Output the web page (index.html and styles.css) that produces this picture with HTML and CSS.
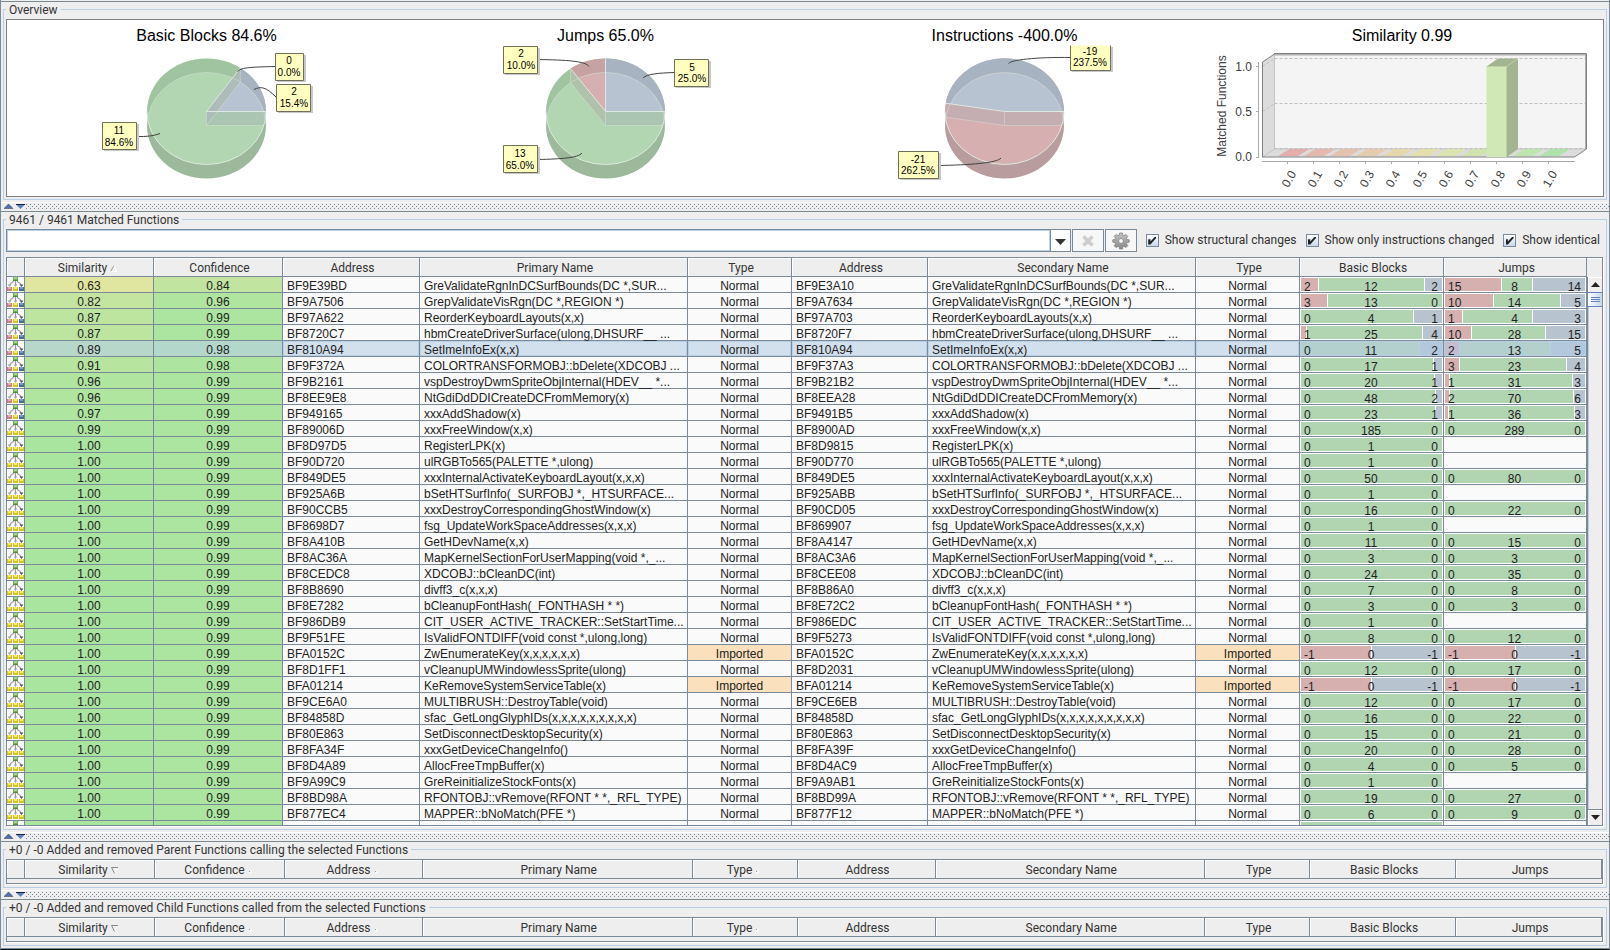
FILE: index.html
```html
<!DOCTYPE html>
<html lang="en">
<head>
<meta charset="utf-8">
<title>Matched Functions</title>
<link rel="stylesheet" href="styles.css">
</head>
<body>
<svg class="defs" width="0" height="0" aria-hidden="true">
  <defs>
    <clipPath id="pie-base"><ellipse cx="199.500" cy="105.500" rx="59.500" ry="53"/></clipPath>
    <clipPath id="pie-top"><ellipse cx="199.500" cy="91.500" rx="59.500" ry="53"/></clipPath>
    <linearGradient id="gear-fill" x1="0" y1="0" x2="0" y2="1"><stop offset="0" stop-color="#c4c4c4"/><stop offset="1" stop-color="#868686"/></linearGradient>
    <symbol id="tree" viewBox="0 0 17 15">
      <path d="M8.500 4v5M7 4.500Q3.500 5.500 2.500 9M10 4.500Q13.500 5.500 14.500 9" fill="none" stroke="#999" stroke-width="1.200"/>
      <path d="M0.500 7.500h4L2.500 10zM6.500 7.500h4L8.500 10z" fill="#aaa"/><path d="M12.500 7.500h4L14.500 10z" fill="#555"/>
      <rect x="6" y="0" width="5" height="4" fill="#6fae55"/><rect x="7" y="0" width="3" height="2" fill="#a5d590"/><path d="M6 3.500h5" stroke="#4f8c3c"/>
    </symbol>
    <symbol id="tree-changed" viewBox="0 0 17 15">
      <use href="#tree" width="17" height="15"/>
      <rect x="0" y="10" width="5" height="4" fill="#cf7c80"/><rect x="1" y="10" width="3" height="2" fill="#e5a9ab"/>
      <rect x="6" y="10" width="5" height="4" fill="#d8c325"/><rect x="7" y="10" width="3" height="2" fill="#f8ea68"/>
      <rect x="12" y="10" width="5" height="4" fill="#476f98"/><rect x="13" y="10" width="3" height="2" fill="#7c9fc0"/>
    </symbol>
    <symbol id="tree-same" viewBox="0 0 17 15">
      <use href="#tree" width="17" height="15"/>
      <path d="M0 10h5v4H0zM6 10h5v4H6zM12 10h5v4h-5z" fill="#d8c325"/>
      <path d="M1 10h3v2H1zM7 10h3v2H7zM13 10h3v2h-3z" fill="#f8ea68"/>
    </symbol>
  </defs>
</svg>
<main class="window">
  <section class="pane">
    <fieldset class="group">
      <legend>Overview</legend>
      <div class="charts">
        <svg class="chart" viewBox="0 0 399 176" role="img" aria-label="Basic Blocks">
          <text class="title" x="199.500" y="21">Basic Blocks 84.6%</text>
          <path fill="#9cb99b" d="M140 91.500v14a59.500 53 0 0 0 119 0v-14z"/>
          <ellipse cx="199.500" cy="91.500" rx="59.500" ry="53" fill="#a0c3a0"/>
          <path fill="#a7b3c0" d="M199.500 91.500H259A59.500 53 0 0 0 233.300 47.900z"/>
          <g clip-path="url(#pie-base)">
            <ellipse cx="199.500" cy="91.500" rx="59.500" ry="53" fill="#b1d6b1"/>
            <path fill="#b7c3d1" d="M199.500 91.500H259A59.500 53 0 0 0 233.300 47.900z"/>
          </g>
          <g clip-path="url(#pie-top)">
            <path fill="#aac6b2" d="M199.500 91.500H259v14H199.500z"/>
            <path fill="#adbcb9" d="M199.500 91.500L233.300 47.900v14L199.500 105.500z"/>
          </g>
          <path class="edge faint" d="M140 105.500a59.500 53 0 0 1 119 0M199.500 91.500v14M233.300 47.900v14L199.500 105.500H257"/>
          <path class="edge" d="M140 91.500a59.500 53 0 0 0 119 0H199.500L233.300 47.900"/>
          <path class="leader" d="M230.500 51.500C234 48 240 47 269 46.500M247 69.500C254 66 259 67 269 77M130 116.500Q144 117 153 113.500"/>
          <path class="tip-shadow" d="M270 35h29v27h-29zM271 66h35v27h-35zM97 104h35v27h-35z"/>
          <path class="tip" d="M268.500 33.500h28v27h-28zM269.500 64.500h34v27h-34zM95.500 102.500h34v27h-34z"/>
          <g class="tip-text">
            <text x="282" y="44">0</text><text x="282" y="56">0.0%</text>
            <text x="287" y="75">2</text><text x="287" y="87">15.4%</text>
            <text x="112" y="114">11</text><text x="112" y="126">84.6%</text>
          </g>
        </svg>
        <svg class="chart" viewBox="0 0 399 176" role="img" aria-label="Jumps">
          <text class="title" x="199.500" y="21">Jumps 65.0%</text>
          <path fill="#9cb99b" d="M140 91.500v14a59.500 53 0 0 0 119 0v-14z"/>
          <ellipse cx="199.500" cy="91.500" rx="59.500" ry="53" fill="#a0c3a0"/>
          <path fill="#a7b3c0" d="M199.500 91.500H259A59.500 53 0 0 0 199.500 38.500z"/>
          <path fill="#c6a2a3" d="M199.500 91.500V38.500A59.500 53 0 0 0 164.500 48.600z"/>
          <g clip-path="url(#pie-base)">
            <ellipse cx="199.500" cy="91.500" rx="59.500" ry="53" fill="#b1d6b1"/>
            <path fill="#b7c3d1" d="M199.500 91.500H259A59.500 53 0 0 0 199.500 38.500z"/>
            <path fill="#d6b0b1" d="M199.500 91.500V38.500A59.500 53 0 0 0 164.500 48.600z"/>
          </g>
          <g clip-path="url(#pie-top)">
            <path fill="#aac6b2" d="M199.500 91.500H259v14H199.500z"/>
            <path fill="#b0c2ab" d="M199.500 91.500L164.500 48.600v14L199.500 105.500z"/>
          </g>
          <path class="edge faint" d="M140 105.500a59.500 53 0 0 1 119 0M199.500 91.500v14M164.500 48.600v14L199.500 105.500H257"/>
          <path class="edge" d="M140 91.500a59.500 53 0 0 0 119 0H199.500V38.500M199.500 91.500L164.500 48.600"/>
          <path class="leader" d="M132 39.500C160 40 180 41 183 46.500M132 139.500C155 139 172 138 176 133M269 52.500C252 53 241 54 237 58"/>
          <path class="tip-shadow" d="M99 28h35v27H99zM99 127h35v27H99zM270 41h35v27h-35z"/>
          <path class="tip" d="M97.500 26.500h34v27h-34zM97.500 125.500h34v27h-34zM268.500 39.500h34v27h-34z"/>
          <g class="tip-text">
            <text x="115" y="37">2</text><text x="115" y="49">10.0%</text>
            <text x="114" y="137">13</text><text x="114" y="149">65.0%</text>
            <text x="286" y="51">5</text><text x="286" y="62">25.0%</text>
          </g>
        </svg>
        <svg class="chart" viewBox="0 0 399 176" role="img" aria-label="Instructions">
          <text class="title" x="199.500" y="21">Instructions -400.0%</text>
          <path fill="#b99c9d" d="M140 91.500v14a59.500 53 0 0 0 119 0v-14z"/>
          <ellipse cx="199.500" cy="91.500" rx="59.500" ry="53" fill="#c2a4a6"/>
          <path fill="#a7b3c0" d="M199.500 91.500H259A59.500 53 0 0 0 140.700 83.200z"/>
          <g clip-path="url(#pie-base)">
            <ellipse cx="199.500" cy="91.500" rx="59.500" ry="53" fill="#d6b0b1"/>
            <path fill="#b7c3d1" d="M199.500 91.500H259A59.500 53 0 0 0 140.700 83.200z"/>
          </g>
          <g clip-path="url(#pie-top)">
            <path fill="#c5aeb1" d="M199.500 91.500H259v14H199.500L140.700 97.200v-14z"/>
          </g>
          <path class="edge faint" d="M140 105.500a59.500 53 0 0 1 119 0M199.500 91.500v14M140.700 97.200L199.500 105.500H257"/>
          <path class="edge" d="M140 91.500a59.500 53 0 0 0 119 0H199.500L140.700 83.200"/>
          <path class="leader" d="M266 37.500C230 37 206 40 203.500 43.500M133 145.500C165 145 192 143 196 138"/>
          <path class="tip-shadow" d="M267 27h41v25h-41zM95 133h41v27H95z"/>
          <path class="tip-fill" d="M265.500 25.500h40v25h-40z"/>
          <path class="tip-side" d="M265.500 25.500v25h40v-25"/>
          <path class="tip" d="M93.500 131.500h40v27h-40z"/>
          <g class="tip-text">
            <text x="285" y="35">-19</text><text x="285" y="46">237.5%</text>
            <text x="113" y="143">-21</text><text x="113" y="154">262.5%</text>
          </g>
        </svg>
        <svg class="chart" id="similarity-chart" viewBox="0 0 399 176" role="img" aria-label="Similarity">
          <text class="title" x="198" y="21">Similarity 0.99</text>
          <path fill="#f4f4f4" d="M70.500 34.500h311v94.500h-311z"/>
          <path fill="#dcdcdc" d="M58.500 42L70.500 34v95l-12 8zM58.500 137l12-8H382l-12 8z"/>
          <path d="M70.500 34v95H382M70.500 129l-12 8" fill="none" stroke="#c4c4c4"/>
          <path d="M70.500 38.500H382M70.500 83.500H382M70.500 128.500H382M58.500 46.500l12-8M58.500 91.500l12-8" fill="none" stroke="#c0c0c0" stroke-dasharray="3 2"/>
          <path d="M70 34.500H382V129" fill="none" stroke="#b0b0b0" stroke-width="2"/>
          <path d="M58.500 137V42l12-8M70 33.500H382.500V129l-12 8H58.500" fill="none" stroke="#808080"/>
          <g id="tiles"></g>
          <path fill="#cfe8b5" d="M282.500 46.500h20V137h-20z"/>
          <path fill="#a3b590" d="M282.500 46.500l11.500-8h20V129l-11.500 8V46.500z"/>
          <path d="M282.500 46.500h20l11.500-8M302.500 46.500V137" fill="none" stroke="#bdd0a6"/>
          <path d="M54.500 42v95M52 46.500h3M52 91.500h3M52 137.500h3M58 141.500h313" fill="none" stroke="#a8a8a8"/>
          <g class="axis end"><text x="48" y="51">1.0</text><text x="48" y="96">0.5</text><text x="48" y="141">0.0</text></g>
          <text class="axis" transform="translate(22 86) rotate(-90)">Matched Functions</text>
          <g class="axis" id="ticks"></g>
        </svg>
      </div>
    </fieldset>
  </section>
  <div class="splitter"><svg width="22" height="5" viewBox="0 0 22 5"><path fill="#4f6fb0" stroke="#334" stroke-width=".5" d="M0 4.500L4.500 0 9 4.500z"/><path fill="#5b80c8" d="M12.500 1h8L16.500 5z"/><path stroke="#223" d="M12 .5h9"/></svg></div>
  <section class="pane grow">
    <fieldset class="group">
      <legend>9461 / 9461 Matched Functions</legend>
      <form class="toolbar">
        <div class="combo"><input type="text" aria-label="Filter"><button type="button" aria-label="Filter history"><svg width="11" height="6" viewBox="0 0 11 6"><path d="M0 0h11L5.500 6z" fill="#333"/></svg></button></div>
        <button class="tool" type="button" aria-label="Clear filter"><svg width="14" height="14" viewBox="0 0 14 14"><path d="M2.500 2.500l9 9M11.500 2.500l-9 9" stroke="#cdcdcd" stroke-width="3.600"/></svg></button>
        <button class="tool" type="button" aria-label="Filter settings"><svg width="18" height="18" viewBox="0 0 18 18"><path fill="url(#gear-fill)" stroke="#777" stroke-width=".7" fill-rule="evenodd" d="M7.600 1h2.800l.4 2.200 1.200.5 1.900-1.300 1.900 1.900-1.300 1.900.5 1.200 2.200.4v2.400l-2.200.4-.5 1.200 1.300 1.900-1.900 1.900-1.900-1.300-1.200.5-.4 2.200H7.600l-.4-2.200-1.200-.5-1.900 1.300-1.900-1.900 1.300-1.900-.5-1.200L.8 10.200V7.800L3 7.400l.5-1.200-1.300-1.900 1.900-1.900L6 3.700l1.200-.5zM9 6.600a2.400 2.400 0 1 0 .01 0z"/></svg></button>
        <div class="checks">
          <label><input type="checkbox" checked>Show structural changes</label>
          <label><input type="checkbox" checked>Show only instructions changed</label>
          <label><input type="checkbox" checked>Show identical</label>
        </div>
      </form>
      <div class="tablebox main">
        <div class="view">
          <table>
            <colgroup><col class="c-icon"><col class="c-num"><col class="c-num"><col class="c-addr"><col><col class="c-type"><col class="c-addr2"><col><col class="c-type"><col class="c-bb"><col class="c-jumps"></colgroup>
            <thead><tr><th></th><th>Similarity <svg width="7" height="7" viewBox="0 0 7 7"><path d="M.5 6.500L4 .5" stroke="#999" fill="none"/><path d="M4 .5l2.500 6h-6" stroke="#fff" fill="none"/></svg></th><th>Confidence</th><th>Address</th><th>Primary Name</th><th>Type</th><th>Address</th><th>Secondary Name</th><th>Type</th><th>Basic Blocks</th><th>Jumps</th></tr></thead>
            <tbody id="rows"></tbody>
          </table>
        </div>
        <div class="scrollbar">
          <div class="corner"></div>
          <button type="button" aria-label="Scroll up"><svg width="9" height="5" viewBox="0 0 9 5"><path d="M0 5L4.500 0 9 5z" fill="#222"/></svg></button>
          <div class="track"><div class="thumb"><i></i><i></i><i></i></div></div>
          <button class="down" type="button" aria-label="Scroll down"><svg width="9" height="5" viewBox="0 0 9 5"><path d="M0 0h9L4.500 5z" fill="#222"/></svg></button>
        </div>
      </div>
    </fieldset>
  </section>
  <div class="splitter"><svg width="22" height="5" viewBox="0 0 22 5"><path fill="#4f6fb0" stroke="#334" stroke-width=".5" d="M0 4.500L4.500 0 9 4.500z"/><path fill="#5b80c8" d="M12.500 1h8L16.500 5z"/><path stroke="#223" d="M12 .5h9"/></svg></div>
  <section class="pane">
    <fieldset class="group">
      <legend>+0 / -0 Added and removed Parent Functions calling the selected Functions</legend>
      <div class="tablebox empty"></div>
    </fieldset>
  </section>
  <div class="splitter"><svg width="22" height="5" viewBox="0 0 22 5"><path fill="#4f6fb0" stroke="#334" stroke-width=".5" d="M0 4.500L4.500 0 9 4.500z"/><path fill="#5b80c8" d="M12.500 1h8L16.500 5z"/><path stroke="#223" d="M12 .5h9"/></svg></div>
  <section class="pane last">
    <fieldset class="group">
      <legend>+0 / -0 Added and removed Child Functions called from the selected Functions</legend>
      <div class="tablebox empty"></div>
    </fieldset>
  </section>
</main>
<script src="app.js"></script>
</body>
</html>
```
FILE: styles.css
```css
* { box-sizing: border-box; }
body { margin: 0; background: #111; font: 12px/15px Roboto, "Liberation Sans", sans-serif; color: #333; }
.defs { position: absolute; }
.window { display: flex; flex-direction: column; height: 100vh; min-height: 600px; padding-top: 1px; background: #eee; border: solid #7a8a99; border-width: 0 1px; border-bottom: 1px solid #111; }
.pane { display: flex; border-top: 1px solid #7a8a8f; padding: 0 2px 2px; }
.pane.grow { flex: 1; min-height: 0; }
.pane.last { border-bottom: 1px solid #7a8a99; }
.group { flex: 1; display: flex; flex-direction: column; min-width: 0; margin: 0; padding: 2px; border: 1px solid #b8cfe5; }
legend { padding: 0 3px; height: 15px; line-height: 16px; }

.charts { display: grid; grid-template-columns: repeat(4, 1fr); border: 1px solid #808080; background: #fff; }
.chart { display: block; width: 100%; height: 176px; font-family: "Liberation Sans", sans-serif; }
.chart text { text-anchor: middle; }
.title { font-size: 16px; fill: #000; }
.axis { font-size: 12px; fill: #404040; }
.chart .end text { text-anchor: end; }
.edge { fill: none; stroke: #dde8e0; stroke-width: 1; }
.edge.faint { stroke-opacity: .4; }
.leader { fill: none; stroke: #444; stroke-width: 1; }
.tip { fill: #ffffc0; stroke: #707058; }
.tip-fill { fill: #ffffc0; }
.tip-side { fill: none; stroke: #707058; }
.tip-shadow { fill: #c8c8c8; }
.tip-text { font-size: 10px; fill: #000; }

.splitter { height: 9px; padding: 1px 0 2px 3px; border-top: 1px solid #fff; background-image: conic-gradient(from 0deg at 1px 1px, transparent 75%, #7a8a99 0), conic-gradient(from 0deg at 1px 1px, transparent 75%, #7a8a99 0); background-size: 4px 4px; background-position: 1px 1px, 3px 3px; background-clip: content-box; }
.splitter svg { display: block; background: #eee; }

.toolbar { display: flex; gap: 1px; height: 23px; margin-bottom: 5px; }
.combo { flex: 1; display: flex; min-width: 0; }
.combo input { flex: 1; min-width: 0; border: 1px solid #7a8a99; box-shadow: inset 0 0 0 1px #b8cfe5; background: #fff; padding: 0 4px; font: inherit; }
.combo button { width: 20px; border: 1px solid #7a8a99; border-left: 0; background: #fdfdfd; padding: 0; }
.tool { width: 32px; padding: 0; border: 1px solid #7a8a99; background: #f7f7f7; display: flex; align-items: center; justify-content: center; }
.checks { display: flex; align-items: center; gap: 9px; padding: 0 4px 0 8px; }
.checks label { display: flex; align-items: center; gap: 6px; line-height: 17px; white-space: nowrap; }
.checks input { appearance: none; width: 13px; height: 13px; margin: 0; border: 1px solid #7a8a99; background: linear-gradient(#fff, #c8d8ec); display: grid; place-items: center; }
.checks input:checked::before { content: ""; width: 8px; height: 8px; background: #222; clip-path: polygon(0 35%, 28% 35%, 28% 62%, 85% 0, 100% 0, 100% 20%, 28% 100%, 0 100%); }

.tablebox { border: 1px solid #7a8a99; box-shadow: 1px 1px 0 #fff; margin: 0 1px 1px 0; }
.main { flex: 1; min-height: 0; display: flex; }
.view { flex: 1; min-width: 0; overflow: hidden; background: #fff; }
table { width: 100%; table-layout: fixed; border-collapse: separate; border-spacing: 0; }
.c-icon { width: 18px; } .c-num { width: 129px; } .c-addr { width: 137px; } .c-addr2 { width: 136px; }
.c-type { width: 104px; } .c-bb { width: 144px; } .c-jumps { width: 143px; }
th { height: 19px; padding: 2px 0 0 3px; font-weight: 400; background: #eee; border: solid #7a8a99; border-width: 0 1px 1px 0; box-shadow: inset 1px 1px 0 #fff; }
th svg { margin-right: 6px; }
.empty { padding-bottom: 4px; }
.empty .c-num { width: 130px; } .empty .c-addr, .empty .c-addr2 { width: 138px; }
.empty .c-type { width: 105px; } .empty .c-bb, .empty .c-jumps { width: 146px; }
td { height: 16px; padding: 3px 4px 0; font: 12px/12px "Liberation Sans", sans-serif; color: #222; background: #fafafa; border: solid #7a8a99; border-width: 0 1px 1px 0; white-space: nowrap; vertical-align: top; }
td.icon { padding: 0; background: #fff; }
td.icon svg { display: block; }
td.mid { text-align: center; }
td.imported { background: #fae0bc; }
td.sim { background: var(--heat); }
td.diff { padding: 1px; background: #fff; }
tr.selected td { background: #d2dfed; box-shadow: inset 0 0 0 1px #b8cfe5; }
tr.selected td.icon { background: #fff; box-shadow: none; }
tr.selected td.sim { background: var(--heat); box-shadow: none; }
tr.selected td.diff { background: #b8cfe5; }
.bar { display: grid; grid-template-rows: 13px; height: 13px; }
.segments, .counts { grid-area: 1 / 1; }
.segments { display: flex; gap: 1px; }
.segments i { flex-basis: 0; }
.removed { background: #d6b0ae; } .same { background: #b1d5b1; } .added { background: #b7c3cf; }
.selected .removed { background: #c5bccd; } .selected .same { background: #b3d0ce; } .selected .added { background: #b4c8dd; }
.counts { display: grid; grid-template-columns: 1fr auto 1fr; padding: 2px 4px 0 3px; line-height: 14px; }
.counts span:last-child { text-align: right; }

.scrollbar { width: 15px; display: flex; flex-direction: column; background: #eee; }
.corner { height: 19px; box-shadow: inset 0 1px 0 #fff; }
.scrollbar button { height: 15px; padding: 0; border: 0; border-left: 1px solid #7a8a99; background: #eee; display: flex; align-items: center; justify-content: center; box-shadow: inset 1px 1px 0 #fff; }
.scrollbar .down { height: 16px; border-top: 1px solid #7a8a99; }
.track { flex: 1; border-left: 1px solid #7a8a99; box-shadow: inset 1px 0 0 #b8cfe5; }
.thumb { height: 15px; border: solid #6382bf; border-width: 1px 0; background: linear-gradient(90deg, #fff, #c4d6ec); display: flex; flex-direction: column; align-items: center; justify-content: center; gap: 1px; }
.thumb i { width: 9px; height: 1px; background: #6382bf; }
```
FILE: app.js
```js
const SVG = "http://www.w3.org/2000/svg";

// similarity, confidence, primary address, name, secondary address, basic blocks, jumps, type
const rows = [
  [0.63, 0.84, "BF9E39BD", "GreValidateRgnInDCSurfBounds(DC *,SUR...", "BF9E3A10", [2, 12, 2], [15, 8, 14]],
  [0.82, 0.96, "BF9A7506", "GrepValidateVisRgn(DC *,REGION *)", "BF9A7634", [3, 13, 0], [10, 14, 5]],
  [0.87, 0.99, "BF97A622", "ReorderKeyboardLayouts(x,x)", "BF97A703", [0, 4, 1], [1, 4, 3]],
  [0.87, 0.99, "BF8720C7", "hbmCreateDriverSurface(ulong,DHSURF__ ...", "BF8720F7", [1, 25, 4], [10, 28, 15]],
  [0.89, 0.98, "BF810A94", "SetImeInfoEx(x,x)", "BF810A94", [0, 11, 2], [2, 13, 5]],
  [0.91, 0.98, "BF9F372A", "COLORTRANSFORMOBJ::bDelete(XDCOBJ ...", "BF9F37A3", [0, 17, 1], [3, 23, 4]],
  [0.96, 0.99, "BF9B2161", "vspDestroyDwmSpriteObjInternal(HDEV__ *...", "BF9B21B2", [0, 20, 1], [1, 31, 3]],
  [0.96, 0.99, "BF8EE9E8", "NtGdiDdDDICreateDCFromMemory(x)", "BF8EEA28", [0, 48, 2], [2, 70, 6]],
  [0.97, 0.99, "BF949165", "xxxAddShadow(x)", "BF9491B5", [0, 23, 1], [1, 36, 3]],
  [0.99, 0.99, "BF89006D", "xxxFreeWindow(x,x)", "BF8900AD", [0, 185, 0], [0, 289, 0]],
  [1, 0.99, "BF8D97D5", "RegisterLPK(x)", "BF8D9815", [0, 1, 0], null],
  [1, 0.99, "BF90D720", "ulRGBTo565(PALETTE *,ulong)", "BF90D770", [0, 1, 0], null],
  [1, 0.99, "BF849DE5", "xxxInternalActivateKeyboardLayout(x,x,x)", "BF849DE5", [0, 50, 0], [0, 80, 0]],
  [1, 0.99, "BF925A6B", "bSetHTSurfInfo(_SURFOBJ *,_HTSURFACE...", "BF925ABB", [0, 1, 0], null],
  [1, 0.99, "BF90CCB5", "xxxDestroyCorrespondingGhostWindow(x)", "BF90CD05", [0, 16, 0], [0, 22, 0]],
  [1, 0.99, "BF8698D7", "fsg_UpdateWorkSpaceAddresses(x,x,x)", "BF869907", [0, 1, 0], null],
  [1, 0.99, "BF8A410B", "GetHDevName(x,x)", "BF8A4147", [0, 11, 0], [0, 15, 0]],
  [1, 0.99, "BF8AC36A", "MapKernelSectionForUserMapping(void *,_...", "BF8AC3A6", [0, 3, 0], [0, 3, 0]],
  [1, 0.99, "BF8CEDC8", "XDCOBJ::bCleanDC(int)", "BF8CEE08", [0, 24, 0], [0, 35, 0]],
  [1, 0.99, "BF8B8690", "divff3_c(x,x,x)", "BF8B86A0", [0, 7, 0], [0, 8, 0]],
  [1, 0.99, "BF8E7282", "bCleanupFontHash(_FONTHASH * *)", "BF8E72C2", [0, 3, 0], [0, 3, 0]],
  [1, 0.99, "BF986DB9", "CIT_USER_ACTIVE_TRACKER::SetStartTime...", "BF986EDC", [0, 1, 0], null],
  [1, 0.99, "BF9F51FE", "IsValidFONTDIFF(void const *,ulong,long)", "BF9F5273", [0, 8, 0], [0, 12, 0]],
  [1, 0.99, "BFA0152C", "ZwEnumerateKey(x,x,x,x,x,x)", "BFA0152C", [-1, 0, -1], [-1, 0, -1], "Imported"],
  [1, 0.99, "BF8D1FF1", "vCleanupUMWindowlessSprite(ulong)", "BF8D2031", [0, 12, 0], [0, 17, 0]],
  [1, 0.99, "BFA01214", "KeRemoveSystemServiceTable(x)", "BFA01214", [-1, 0, -1], [-1, 0, -1], "Imported"],
  [1, 0.99, "BF9CE6A0", "MULTIBRUSH::DestroyTable(void)", "BF9CE6EB", [0, 12, 0], [0, 17, 0]],
  [1, 0.99, "BF84858D", "sfac_GetLongGlyphIDs(x,x,x,x,x,x,x,x,x)", "BF84858D", [0, 16, 0], [0, 22, 0]],
  [1, 0.99, "BF80E863", "SetDisconnectDesktopSecurity(x)", "BF80E863", [0, 15, 0], [0, 21, 0]],
  [1, 0.99, "BF8FA34F", "xxxGetDeviceChangeInfo()", "BF8FA39F", [0, 20, 0], [0, 28, 0]],
  [1, 0.99, "BF8D4A89", "AllocFreeTmpBuffer(x)", "BF8D4AC9", [0, 4, 0], [0, 5, 0]],
  [1, 0.99, "BF9A99C9", "GreReinitializeStockFonts(x)", "BF9A9AB1", [0, 1, 0], null],
  [1, 0.99, "BF8BD98A", "RFONTOBJ::vRemove(RFONT * *,_RFL_TYPE)", "BF8BD99A", [0, 19, 0], [0, 27, 0]],
  [1, 0.99, "BF877EC4", "MAPPER::bNoMatch(PFE *)", "BF877F12", [0, 6, 0], [0, 9, 0]]
];
const selected = 4;

// Colour runs from yellow to green as the score nears 1.
function heat(v, isSelected) {
  const red = Math.round(170 + (1 - v) * 145);
  return isSelected ? `rgb(${Math.round(red * 0.3 + 128)}, 215, 203)` : `rgb(${red}, 229, 160)`;
}

function diff(counts) {
  if (!counts) return "<td></td>";
  const names = ["removed", "same", "added"];
  const segments = counts.map((n, i) => n ? `<i class="${names[i]}" style="flex-grow:${Math.abs(n)}"></i>` : "").join("");
  const labels = counts.map(n => `<span>${n}</span>`).join("");
  return `<td class="diff"><div class="bar"><div class="segments">${segments}</div><div class="counts">${labels}</div></div></td>`;
}

const body = document.getElementById("rows");
body.innerHTML = rows.map(([s, c, a1, name, a2, bb, j, type = "Normal"], i) => {
  const on = i === selected;
  const kind = `<td class="mid${type === "Imported" ? " imported" : ""}">${type}</td>`;
  const score = v => `<td class="mid sim" style="--heat:${heat(v, on)}">${v.toFixed(2)}</td>`;
  return `<tr${on ? ' class="selected"' : ""}><td class="icon"><svg width="17" height="15"><use href="#tree-${s < 0.99 ? "changed" : "same"}" width="17" height="15"/></svg></td>`
    + score(s) + score(c) + `<td>${a1}</td><td>${name}</td>${kind}<td>${a2}</td><td>${name}</td>${kind}${diff(bb)}${diff(j)}</tr>`;
}).join("") + `<tr><td class="icon"><svg width="17" height="15"><use href="#tree-same" width="17" height="15"/></svg></td><td class="sim" style="--heat:${heat(1)}"></td><td class="sim" style="--heat:${heat(1)}"></td><td></td><td></td><td></td><td></td><td></td><td></td><td class="diff"><div class="bar"><div class="segments"><i class="same" style="flex-grow:1"></i></div></div></td><td></td></tr>`;

// Headers of the two empty lists
const down = '<svg width="7" height="7" viewBox="0 0 7 7"><path d="M6.500 .5L3.500 6.500" stroke="#fff" fill="none"/><path d="M7 .5H.5l3 6" stroke="#888" fill="none"/></svg>';
const dot = '<svg width="4" height="4" viewBox="0 0 4 4"><path d="M3 1v2H1" stroke="#fff" fill="none"/><path d="M1 1h1v1H1z" fill="#999"/></svg>';
document.querySelectorAll(".empty").forEach(box => {
  box.innerHTML = `<table><colgroup><col class="c-icon"><col class="c-num"><col class="c-num"><col class="c-addr"><col><col class="c-type"><col class="c-addr2"><col><col class="c-type"><col class="c-bb"><col class="c-jumps"></colgroup><thead><tr><th></th><th>Similarity ${down}</th><th>Confidence ${dot}</th><th>Address ${dot}</th><th>Primary Name</th><th>Type ${dot}</th><th>Address</th><th>Secondary Name</th><th>Type</th><th>Basic Blocks</th><th>Jumps</th></tr></thead></table>`;
});

// Similarity histogram: floor tiles, tick marks and tick labels
const colours = ["#e3adad", "#e4b8ad", "#e5c2ad", "#e6ccae", "#e6d6ae", "#e3e0ae", "#dbe3ae", "#d0e3ae", "#c8e5ae", "#bfe5ae", "#b0e3ac"];
colours.forEach((fill, i) => {
  const x = 74 + 26 * i + (i > 4 ? 1 : 0);
  const tile = document.createElementNS(SVG, "path");
  tile.setAttribute("d", `M${x} 136l11.500-7h20l-11.500 7z`);
  tile.setAttribute("fill", fill);
  document.getElementById("tiles").append(tile);
  const tick = document.createElementNS(SVG, "path");
  tick.setAttribute("d", `M${x + 9.5} 141v3`);
  tick.setAttribute("stroke", "#a8a8a8");
  const text = document.createElementNS(SVG, "text");
  text.setAttribute("transform", `translate(${x + 11} 159) rotate(-60)`);
  text.setAttribute("y", 4);
  text.textContent = (i / 10).toFixed(1);
  document.getElementById("ticks").append(tick, text);
});
```
